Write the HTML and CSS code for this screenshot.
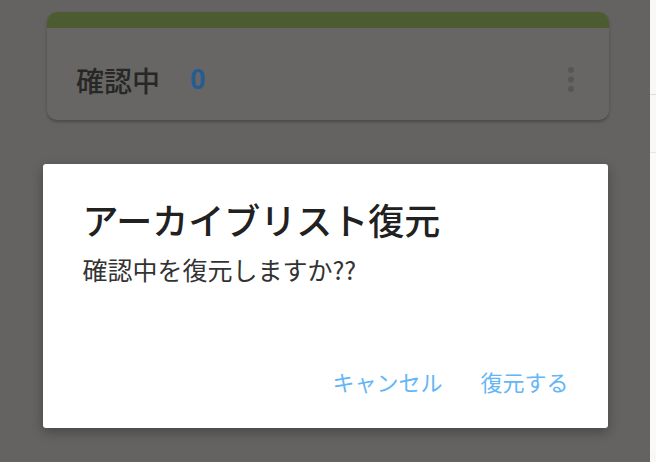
FILE: index.html
```html
<!DOCTYPE html>
<html lang="ja">
<head>
    <meta charset="UTF-8">
    <meta name="viewport" content="width=device-width, initial-scale=1.0">
    <title>アーカイブリスト復元</title>
    <link rel="stylesheet" href="styles.css">
</head>
<body>
    <div class="screen">
        <main class="board">
            <section class="list-card">
                <div class="list-bar"></div>
                <div class="list-head">
                    <span class="list-name">確認中</span>
                    <span class="list-count">0</span>
                    <svg class="list-menu" width="8" height="30" viewBox="0 0 8 30">
                        <circle cx="4" cy="5" r="3"/>
                        <circle cx="4" cy="14.5" r="3"/>
                        <circle cx="4" cy="24" r="3"/>
                    </svg>
                </div>
            </section>

            <div class="scrim">
                <div class="dialog">
                    <h2 class="dialog-title">アーカイブリスト復元</h2>
                    <p class="dialog-text">確認中を復元しますか??</p>
                    <div class="dialog-actions">
                        <button class="text-btn">キャンセル</button>
                        <button class="text-btn">復元する</button>
                    </div>
                </div>
            </div>
        </main>

        <aside class="peek">
            <div class="peek-top"></div>
            <div class="peek-row"></div>
        </aside>
    </div>
</body>
</html>
```

FILE: styles.css
```css
* {
    box-sizing: border-box;
}
body {
    margin: 0;
    font-family: "Noto Sans CJK JP", "Noto Sans", sans-serif;
    background: #f6f6f6;
}
.screen {
    display: flex;
    height: 462px;
    overflow: hidden;
}
.board {
    position: relative;
    width: 650px;
    flex: none;
    background: #9a9895;
    padding: 12px 0 0 47px;
}
.list-card {
    width: 562px;
    height: 108px;
    background: #9e9d9a;
    border-radius: 10px;
    overflow: hidden;
    box-shadow: 0 2px 3px rgba(0, 0, 0, 0.25);
}
.list-bar {
    height: 16px;
    background: #758c4b;
}
.list-head {
    display: flex;
    align-items: center;
    height: 92px;
    padding: 12px 34px 0 29px;
}
.list-name {
    font-size: 28px;
    font-weight: 500;
    color: #3c3c3c;
}
.list-count {
    margin-left: 30px;
    font-family: Roboto, sans-serif;
    font-size: 27px;
    font-weight: 700;
    color: #3a8ee0;
}
.list-menu {
    margin-left: auto;
    fill: #858583;
}
.scrim {
    position: absolute;
    inset: 0;
    background: rgba(0, 0, 0, 0.35);
    display: flex;
    justify-content: center;
    align-items: flex-start;
    padding-top: 164px;
}
.dialog {
    width: 565px;
    height: 264px;
    background: #fff;
    border-radius: 3px;
    box-shadow: 0 4px 12px rgba(0, 0, 0, 0.3);
    padding: 28px 39px 0 40px;
    display: flex;
    flex-direction: column;
}
.dialog-title {
    margin: 0;
    font-size: 36px;
    font-weight: 500;
    line-height: 54px;
    color: #212121;
}
.dialog-text {
    margin: 6px 0 0;
    font-size: 25px;
    line-height: 34px;
    color: #333;
}
.dialog-actions {
    margin-top: auto;
    margin-bottom: 32px;
    display: flex;
    justify-content: flex-end;
    gap: 38px;
}
.text-btn {
    padding: 0;
    border: none;
    background: none;
    font-family: inherit;
    font-size: 22px;
    line-height: 30px;
    color: #64b5f6;
    cursor: pointer;
}
.peek {
    flex: 1;
    background: #f8f8f8;
}
.peek-top {
    height: 95px;
    border-bottom: 1px solid #dedede;
}
.peek-row {
    margin-top: 57px;
    height: 300px;
    border-top: 1px solid #e6e6e6;
    background: #fafafa;
}
```
